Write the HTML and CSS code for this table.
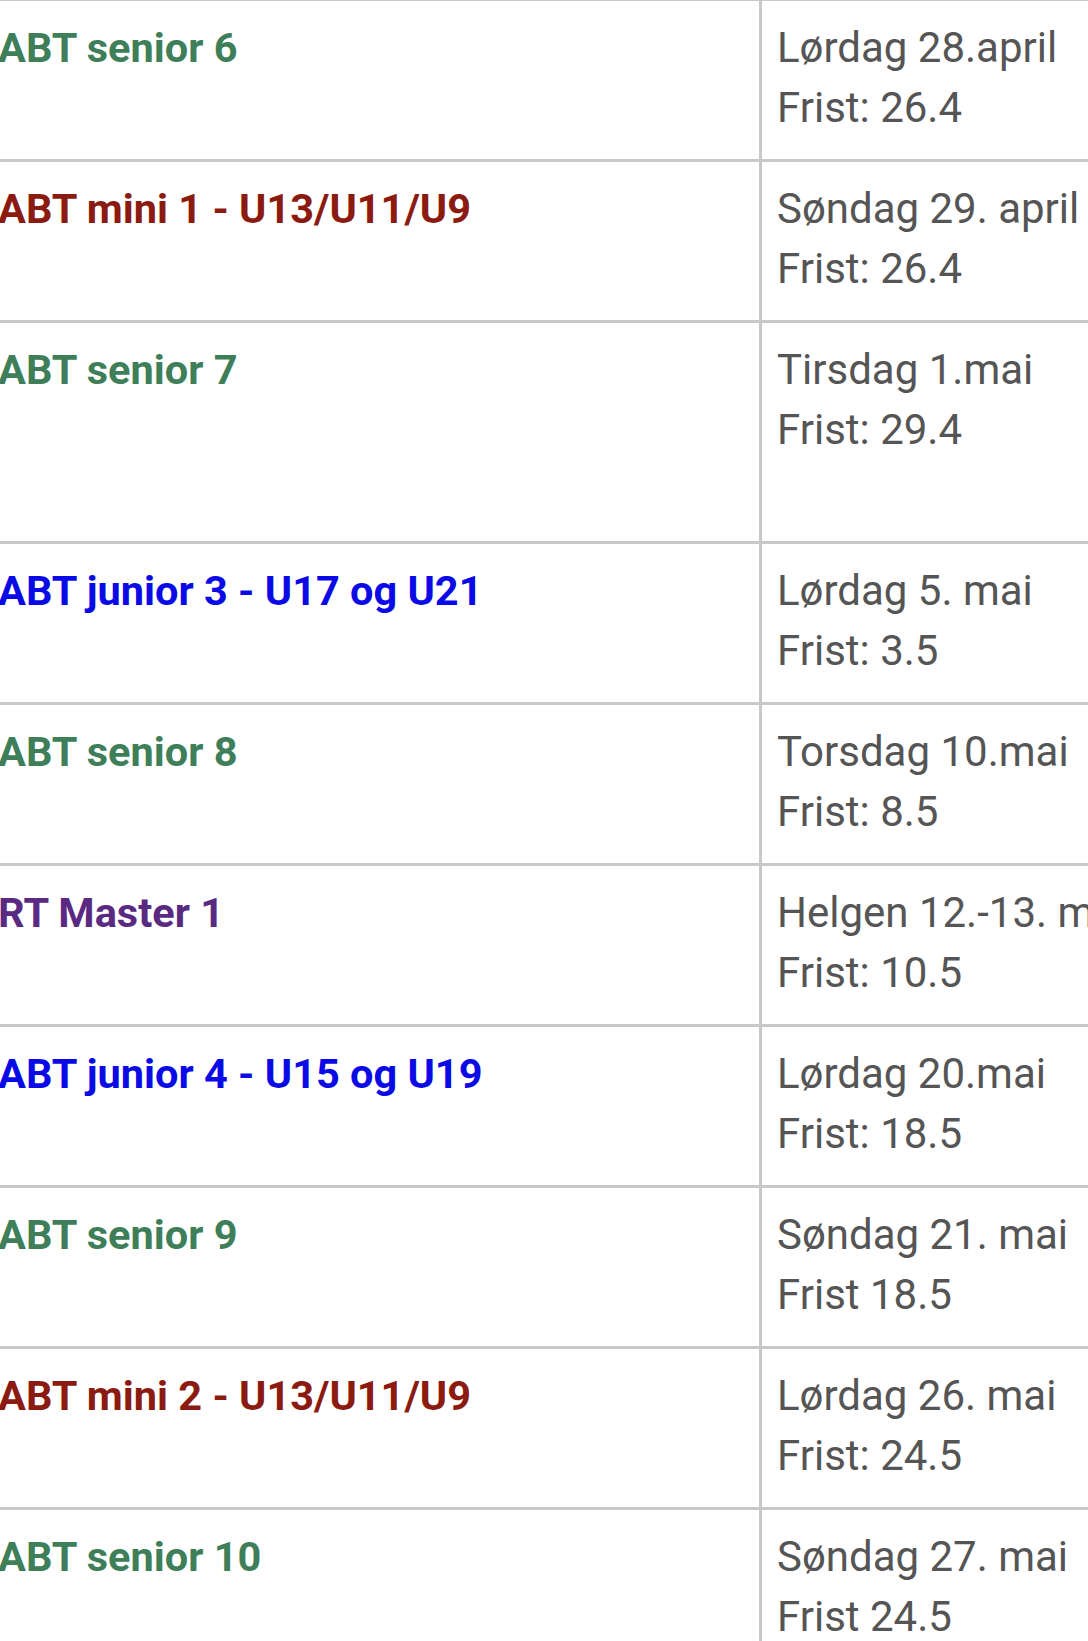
FILE: index.html
```html
<!DOCTYPE html>
<html lang="no">
<head>
<meta charset="utf-8">
<title>Terminliste</title>
<link rel="stylesheet" href="styles.css">
</head>
<body>
<div class="sheet">
  <div class="row">
    <div class="name green">ABT senior 6</div>
    <div class="date">Lørdag 28.april<br>Frist: 26.4</div>
  </div>
  <div class="row">
    <div class="name red">ABT mini 1 - U13/U11/U9</div>
    <div class="date">Søndag 29. april<br>Frist: 26.4</div>
  </div>
  <div class="row tall">
    <div class="name green">ABT senior 7</div>
    <div class="date">Tirsdag 1.mai<br>Frist: 29.4</div>
  </div>
  <div class="row">
    <div class="name blue">ABT junior 3 - U17 og U21</div>
    <div class="date">Lørdag 5. mai<br>Frist: 3.5</div>
  </div>
  <div class="row">
    <div class="name green">ABT senior 8</div>
    <div class="date">Torsdag 10.mai<br>Frist: 8.5</div>
  </div>
  <div class="row">
    <div class="name purple">RT Master 1</div>
    <div class="date">Helgen 12.-13. mai<br>Frist: 10.5</div>
  </div>
  <div class="row">
    <div class="name blue">ABT junior 4 - U15 og U19</div>
    <div class="date">Lørdag 20.mai<br>Frist: 18.5</div>
  </div>
  <div class="row">
    <div class="name green">ABT senior 9</div>
    <div class="date">Søndag 21. mai<br>Frist 18.5</div>
  </div>
  <div class="row">
    <div class="name red">ABT mini 2 - U13/U11/U9</div>
    <div class="date">Lørdag 26. mai<br>Frist: 24.5</div>
  </div>
  <div class="row">
    <div class="name green">ABT senior 10</div>
    <div class="date">Søndag 27. mai<br>Frist 24.5</div>
  </div>
</div>
</body>
</html>
```
FILE: styles.css
```css
html, body {
  margin: 0;
  padding: 0;
  background: #ffffff;
  overflow: hidden;
}
body {
  width: 1088px;
  height: 1641px;
  font-family: Roboto, "Noto Sans", "Liberation Sans", sans-serif;
  font-size: 42px;
  line-height: 60px;
}
.sheet {
  margin-top: -2px;
  margin-left: -1px;
  width: 1300px;
}
.row {
  display: grid;
  grid-template-columns: 763px 1fr;
  border-top: 3px solid #c8c8c8;
}
.name {
  box-sizing: border-box;
  border-right: 3px solid #c8c8c8;
  padding-top: 17px;
  font-size: 41.5px;
  font-weight: 700;
  white-space: nowrap;
  text-indent: -1px;
}
.date {
  padding: 17px 0 21px 15px;
  color: #555555;
  white-space: nowrap;
}
.tall .date {
  padding-bottom: 81px;
}
.green { color: #3e7f5a; }
.red { color: #8b1a10; }
.blue { color: #0a0ae6; }
.purple { color: #5a2a82; }
```
